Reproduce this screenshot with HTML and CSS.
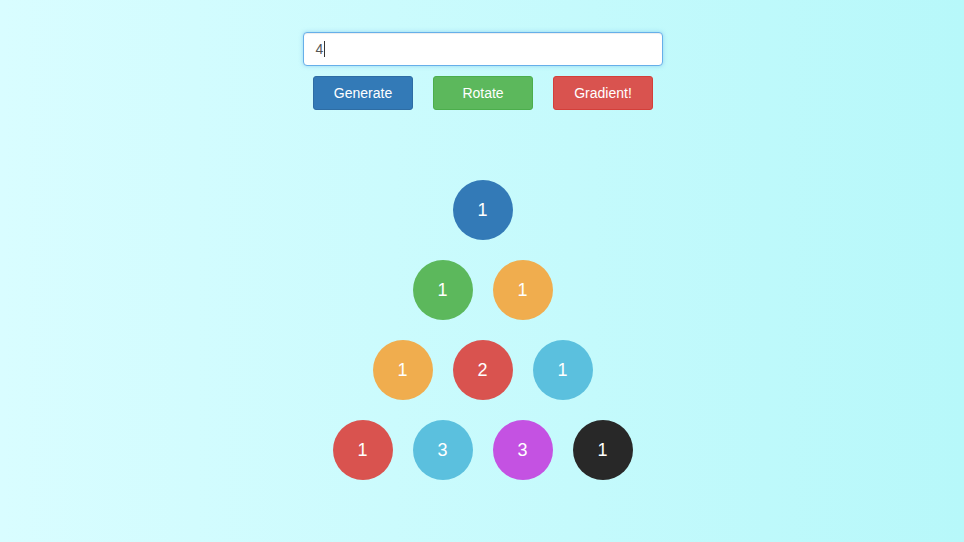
FILE: index.html
```html
<!DOCTYPE html>
<html>
<head>
<meta charset="utf-8">
<link rel="stylesheet" href="styles.css">
</head>
<body>
<div class="page">
  <div class="controls">
    <div class="input-box"><span class="input-text">4</span><span class="caret"></span></div>
    <div class="buttons">
      <button class="btn btn-blue">Generate</button>
      <button class="btn btn-green">Rotate</button>
      <button class="btn btn-red">Gradient!</button>
    </div>
  </div>
  <div class="triangle">
    <div class="row">
      <div class="dot c-blue">1</div>
    </div>
    <div class="row">
      <div class="dot c-green">1</div>
      <div class="dot c-orange">1</div>
    </div>
    <div class="row">
      <div class="dot c-orange">1</div>
      <div class="dot c-red">2</div>
      <div class="dot c-cyan">1</div>
    </div>
    <div class="row">
      <div class="dot c-red">1</div>
      <div class="dot c-cyan">3</div>
      <div class="dot c-purple">3</div>
      <div class="dot c-black">1</div>
    </div>
  </div>
</div>
</body>
</html>
```
FILE: styles.css
```css
html, body {
  margin: 0;
  padding: 0;
  height: 100%;
}
body {
  background: linear-gradient(to right, #d9fdff 0%, #b7f8fa 100%);
  font-family: "Liberation Sans", Arial, sans-serif;
}
.page {
  display: flex;
  flex-direction: column;
  align-items: center;
  padding-top: 32px;
}
.controls {
  display: flex;
  flex-direction: column;
  align-items: center;
  padding-left: 1px;
}
.input-box {
  box-sizing: border-box;
  width: 360px;
  height: 34px;
  background: #fff;
  border: 1px solid #66afe9;
  border-radius: 4px;
  box-shadow: inset 0 1px 1px rgba(0,0,0,.075), 0 0 4px rgba(102,175,233,.5);
  display: flex;
  align-items: center;
  padding-left: 12px;
  font-size: 14px;
  color: #555;
}
.caret {
  display: inline-block;
  width: 1px;
  height: 16px;
  background: #333;
  margin-left: 1px;
}
.buttons {
  display: flex;
  gap: 20px;
  margin-top: 10px;
  padding-left: 1px;
}
.btn {
  box-sizing: border-box;
  width: 100px;
  height: 34px;
  border: 1px solid transparent;
  border-radius: 3px;
  color: #fff;
  font-family: "Liberation Sans", Arial, sans-serif;
  font-size: 14px;
  padding: 0;
  cursor: pointer;
}
.btn-blue { background: #337ab7; border-color: #2e6da4; }
.btn-green { background: #5cb85c; border-color: #4cae4c; }
.btn-red { background: #d9534f; border-color: #d43f3a; }
.triangle {
  margin-top: 70px;
  display: flex;
  flex-direction: column;
  align-items: center;
  gap: 20px;
  padding-left: 1px;
}
.row {
  display: flex;
  gap: 20px;
}
.dot {
  width: 60px;
  height: 60px;
  border-radius: 50%;
  display: flex;
  align-items: center;
  justify-content: center;
  color: #fff;
  font-size: 18px;
}
.c-blue { background: #337ab7; }
.c-green { background: #5cb85c; }
.c-orange { background: #f0ad4e; }
.c-red { background: #d9534f; }
.c-cyan { background: #5bc0de; }
.c-purple { background: #c452e2; }
.c-black { background: #282828; }
```
